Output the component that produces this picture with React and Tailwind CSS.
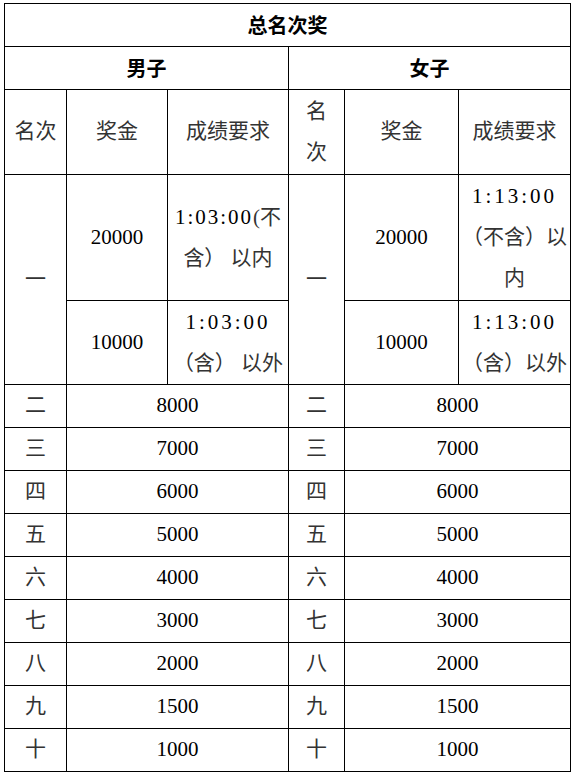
import React from "react";

const ranks = [
  ["二", "8000"],
  ["三", "7000"],
  ["四", "6000"],
  ["五", "5000"],
  ["六", "4000"],
  ["七", "3000"],
  ["八", "2000"],
  ["九", "1500"],
  ["十", "1000"],
];

const td = "border border-black p-0 text-center align-middle";
const cjk = "text-[#333]";

export default function App() {
  return (
    <div className="w-[577px] h-[776px] bg-white pt-[3px] pl-[4px] [font-family:'Liberation_Serif','Noto_Sans_CJK_SC',serif] text-[21px] text-black">
      <table className="table-fixed border-collapse w-[566px]">
        <colgroup>
          <col className="w-[62px]" />
          <col className="w-[101px]" />
          <col className="w-[121px]" />
          <col className="w-[56px]" />
          <col className="w-[114px]" />
          <col className="w-[112px]" />
        </colgroup>
        <tbody>
          <tr className="h-[43px]">
            <td colSpan={6} className={`${td} font-bold text-[20px] [font-family:'Noto_Sans_CJK_SC',sans-serif]`}>
              总名次奖
            </td>
          </tr>
          <tr className="h-[43px]">
            <td colSpan={3} className={`${td} font-bold text-[20px] [font-family:'Noto_Sans_CJK_SC',sans-serif]`}>
              男子
            </td>
            <td colSpan={3} className={`${td} font-bold text-[20px] [font-family:'Noto_Sans_CJK_SC',sans-serif]`}>
              女子
            </td>
          </tr>
          <tr className="h-[85px]">
            <td className={`${td} ${cjk}`}>名次</td>
            <td className={`${td} ${cjk}`}>奖金</td>
            <td className={`${td} ${cjk}`}>成绩要求</td>
            <td className={`${td} ${cjk} leading-[41px]`}>
              名<br />次
            </td>
            <td className={`${td} ${cjk}`}>奖金</td>
            <td className={`${td} ${cjk}`}>成绩要求</td>
          </tr>
          <tr className="h-[126px]">
            <td rowSpan={2} className={`${td} ${cjk}`}>一</td>
            <td className={td}>20000</td>
            <td className={`${td} ${cjk} leading-[41px] whitespace-nowrap`}>
              <span className="tracking-[2px] text-black">1:03:00</span>(不
              <br />
              含） 以内
            </td>
            <td rowSpan={2} className={`${td} ${cjk}`}>一</td>
            <td className={td}>20000</td>
            <td className={`${td} ${cjk} leading-[41px] whitespace-nowrap`}>
              <span className="tracking-[3px] text-black">1:13:00</span>
              <br />
              （不含）以
              <br />
              内
            </td>
          </tr>
          <tr className="h-[84px]">
            <td className={td}>10000</td>
            <td className={`${td} ${cjk} leading-[41px] whitespace-nowrap`}>
              <span className="tracking-[3px] text-black">1:03:00</span>
              <br />
              （含） 以外
            </td>
            <td className={td}>10000</td>
            <td className={`${td} ${cjk} leading-[41px] whitespace-nowrap`}>
              <span className="tracking-[3px] text-black">1:13:00</span>
              <br />
              （含）以外
            </td>
          </tr>
          {ranks.map(([r, amt]) => (
            <tr key={r} className="h-[43px]">
              <td className={`${td} ${cjk}`}>{r}</td>
              <td colSpan={2} className={td}>{amt}</td>
              <td className={`${td} ${cjk}`}>{r}</td>
              <td colSpan={2} className={td}>{amt}</td>
            </tr>
          ))}
        </tbody>
      </table>
    </div>
  );
}
